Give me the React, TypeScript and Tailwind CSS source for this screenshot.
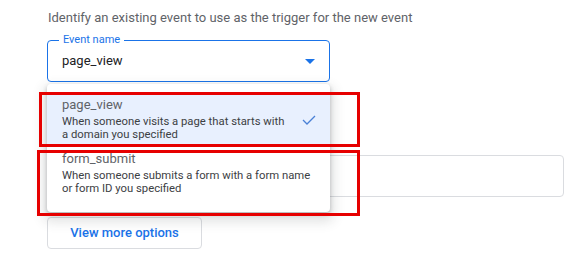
import React from 'react';

const options = [
  {
    name: 'page_view',
    desc: ['When someone visits a page that starts with', 'a domain you specified'],
    selected: true,
  },
  {
    name: 'form_submit',
    desc: ['When someone submits a form with a form name', 'or form ID you specified'],
    selected: false,
  },
];

const App: React.FC = () => {
  return (
    <div className="relative w-[583px] h-[263px] bg-white overflow-hidden font-['Roboto',sans-serif]">
      <div className="pl-[47px] pt-[9px]">
        {/* Intro */}
        <p className="pl-[1px] text-[13px] leading-[18px] text-[#5f6368]">
          Identify an existing event to use as the trigger for the new event
        </p>

        {/* Select */}
        <div className="relative mt-[13px] w-[283px] h-[42px] rounded-[4px] border border-[#1a73e8] flex items-center">
          <span className="absolute -top-[8px] left-[11px] px-[4px] bg-white text-[11px] leading-[14px] text-[#1a73e8]">
            Event name
          </span>
          <span className="pl-[14px] text-[13px] text-[#202124]">page_view</span>
          <svg className="absolute right-[14px] top-[18px]" width="10" height="5" viewBox="0 0 10 5">
            <path d="M0 0 L10 0 L5 5 Z" fill="#1a73e8" />
          </svg>

          {/* Dropdown menu */}
          <div className="absolute left-[-1px] top-[43px] z-10 w-[283px] bg-white rounded-[4px] pt-[9px] pb-[11px] shadow-[0_2px_4px_rgba(60,64,67,0.3),0_6px_12px_4px_rgba(60,64,67,0.15)]">
            {options.map((o) => (
              <div
                key={o.name}
                className={`relative pl-[15px] pr-[10px] pt-[4px] pb-[6px] ${o.selected ? 'bg-[#e8f0fe]' : ''}`}
              >
                <div className="text-[13px] leading-[16px] text-[#5f6368]">{o.name}</div>
                <div className="mt-[2px] text-[11.3px] leading-[13px] text-[#3c4043] whitespace-nowrap">
                  {o.desc.map((l) => (
                    <div key={l}>{l}</div>
                  ))}
                </div>
                {o.selected && (
                  <svg className="absolute right-[14px] top-[22px]" width="14" height="10" viewBox="0 0 14 10">
                    <path d="M1 5 L5 9 L13 1" fill="none" stroke="#4a80d6" strokeWidth="1.3" />
                  </svg>
                )}
              </div>
            ))}
          </div>
        </div>

        {/* Field partly hidden behind menu */}
        <div className="mt-[73px] w-[517px] h-[42px] rounded-[4px] border border-[#dadce0]" />

        {/* Button */}
        <button className="mt-[20px] w-[155px] h-[32px] rounded-[4px] border border-[#dadce0] bg-white text-[13px] font-medium text-[#1a73e8]">
          View more options
        </button>
      </div>

      {/* Annotation boxes */}
      <div className="absolute left-[39px] top-[92px] w-[321px] h-[55px] border-[3px] border-[#e60000] z-20" />
      <div className="absolute left-[37px] top-[150px] w-[323px] h-[66px] border-[3px] border-[#e60000] z-20" />
    </div>
  );
};

export default App;
